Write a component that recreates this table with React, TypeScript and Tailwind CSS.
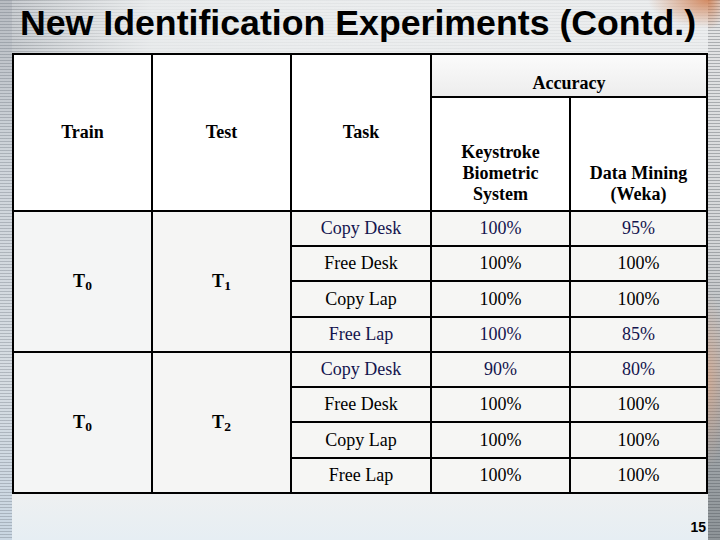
import React from 'react';

type Row = { task: string; keystroke: string; weka: string; navy?: boolean };

const BLOCKS: { train: string; test: string; rows: Row[] }[] = [
  {
    train: '0',
    test: '1',
    rows: [
      { task: 'Copy Desk', keystroke: '100%', weka: '95%', navy: true },
      { task: 'Free Desk', keystroke: '100%', weka: '100%' },
      { task: 'Copy Lap', keystroke: '100%', weka: '100%' },
      { task: 'Free Lap', keystroke: '100%', weka: '85%', navy: true },
    ],
  },
  {
    train: '0',
    test: '2',
    rows: [
      { task: 'Copy Desk', keystroke: '90%', weka: '80%', navy: true },
      { task: 'Free Desk', keystroke: '100%', weka: '100%' },
      { task: 'Copy Lap', keystroke: '100%', weka: '100%' },
      { task: 'Free Lap', keystroke: '100%', weka: '100%' },
    ],
  },
];

const headCell = 'flex items-center justify-center bg-white font-bold text-center';
const dataCell = 'flex items-center justify-center bg-[#f6f6f4]';

export default function App() {
  return (
    <div className="flex w-[720px] h-[540px] overflow-hidden bg-[#eceeef] text-black font-['Liberation_Serif','Times_New_Roman',serif]">
      {/* left striped edge */}
      <div className="w-3 shrink-0 bg-[repeating-linear-gradient(180deg,rgba(90,98,108,0.3)_0px,rgba(90,98,108,0.3)_1px,transparent_1px,transparent_3px),linear-gradient(180deg,#b8bcc2_0%,#cfd5db_30%,#d6dce2_70%,#c9d6e2_100%)]" />

      <div className="flex flex-1 flex-col">
        <h1 className="h-[53px] shrink-0 whitespace-nowrap pl-2 pt-[6px] text-[35.7px] leading-none font-bold font-['Liberation_Sans',Arial,sans-serif] bg-[radial-gradient(ellipse_60px_28px_at_100%_0%,rgba(205,115,65,0.8),transparent),linear-gradient(90deg,rgba(236,238,239,0)_0px,rgba(236,238,239,0.85)_140px,rgba(236,238,239,0.75)_100%),repeating-linear-gradient(180deg,rgba(100,106,112,0.35)_0px,rgba(100,106,112,0.35)_1px,transparent_1px,transparent_3px),linear-gradient(90deg,#c9cdd1,#e6e8e9_40%,#ecedee)]">
          New Identification Experiments (Contd.)
        </h1>

        <div className="grid w-max grid-cols-[137px_137px_138px_137px_135px] grid-rows-[41px_112px_33px_33px_34px_33px_33px_33px_34px_33px] gap-[2px] border-2 border-black bg-black text-[18px] leading-[21px]">
          <div className={`${headCell} row-span-2`}>Train</div>
          <div className={`${headCell} row-span-2`}>Test</div>
          <div className={`${headCell} row-span-2`}>Task</div>
          <div className="col-span-2 flex items-end justify-center pb-[2px] font-bold bg-[linear-gradient(180deg,#fbfbfb,#ededed)]">
            Accuracy
          </div>
          <div className="flex flex-col items-center justify-end bg-white pb-[5px] font-bold text-center">
            <span>Keystroke</span>
            <span>Biometric</span>
            <span>System</span>
          </div>
          <div className="flex flex-col items-center justify-end bg-white pb-[5px] font-bold text-center">
            <span>Data Mining</span>
            <span>(Weka)</span>
          </div>

          {BLOCKS.map((block, b) => (
            <React.Fragment key={b}>
              <div className="row-span-4 flex items-center justify-center bg-[#f4f5f5] font-bold">
                <span>
                  T<sub>{block.train}</sub>
                </span>
              </div>
              <div className="row-span-4 flex items-center justify-center bg-[#f5f5f4] font-bold">
                <span>
                  T<sub>{block.test}</sub>
                </span>
              </div>
              {block.rows.map((r, i) => (
                <React.Fragment key={i}>
                  <div className={`${dataCell} ${r.navy ? 'text-[#14144e]' : ''}`}>{r.task}</div>
                  <div className={`${dataCell} ${r.navy ? 'text-[#14144e]' : ''}`}>{r.keystroke}</div>
                  <div className={`${dataCell} ${r.navy ? 'text-[#14144e]' : ''}`}>{r.weka}</div>
                </React.Fragment>
              ))}
            </React.Fragment>
          ))}
        </div>

        <div className="flex flex-1 items-start justify-end pr-[2px] pt-[26px] bg-[linear-gradient(180deg,#eef0f1,#e6eef3)]">
          <span className="text-[14px] leading-[15px] font-bold font-['Liberation_Sans',Arial,sans-serif]">15</span>
        </div>
      </div>

      {/* right striped edge */}
      <div className="w-3 shrink-0 bg-[radial-gradient(ellipse_20px_30px_at_0%_0%,rgba(205,115,65,0.8),transparent),radial-gradient(ellipse_20px_90px_at_0%_380px,rgba(232,165,125,0.55),transparent),repeating-linear-gradient(180deg,rgba(70,76,82,0.35)_0px,rgba(70,76,82,0.35)_1px,transparent_1px,transparent_3px),linear-gradient(180deg,#e4e5e6_0%,#d4d6d8_45%,#a9aeb2_75%,#8e9498_100%)]" />
    </div>
  );
}
